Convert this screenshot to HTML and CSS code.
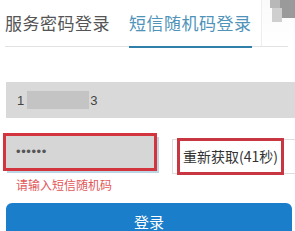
FILE: index.html
```html
<!DOCTYPE html>
<html>
<head>
<meta charset="utf-8">
<link rel="stylesheet" href="styles.css">
</head>
<body>
<div class="page">
  <div class="corner"><span class="sq a"></span><span class="sq b"></span><span class="sq c"></span></div>
  <div class="tabs">
    <div class="tab">服务密码登录</div>
    <div class="tab active">短信随机码登录</div>
  </div>
  <div class="phone"><span>1</span><span class="blur"></span><span>3</span></div>
  <div class="row">
    <div class="left">
      <div class="pw"><div class="pw-in">••••••</div></div>
      <div class="err">请输入短信随机码</div>
    </div>
    <div class="getcode"><span class="mark"></span>重新获取(41秒)</div>
  </div>
  <div class="login">登录</div>
</div>
</body>
</html>
```
FILE: styles.css
```css
html, body { margin: 0; padding: 0; background: #fff; }
body { width: 295px; height: 231px; overflow: hidden; font-family: "Noto Sans CJK SC", "Liberation Sans", sans-serif; }
.page { position: relative; width: 295px; height: 231px; overflow: hidden; }
.corner { position: absolute; top: 0; right: 0; width: 33px; height: 46px; border-left: 1px solid #eeeeee; background: linear-gradient(#fafafa, #fff); }
.sq { position: absolute; display: block; }
.sq.a { left: 8px; top: 0; width: 14px; height: 8px; background: #b8b8b8; }
.sq.b { left: 18px; top: 0; width: 15px; height: 18px; background: #9a9a9a; }
.sq.c { left: 10px; top: 8px; width: 10px; height: 14px; background: #cfcfcf; }
.tabs { display: flex; gap: 19px; margin: 0 7px 0 5px; height: 46px; border-bottom: 1px solid #e3e3e3; }
.tab { font-size: 17px; line-height: 46px; color: #555; letter-spacing: 0.5px; }
.tab.active { color: #4f93b9; border-bottom: 2px solid #2f7fa8; height: 46px; }
.phone { margin: 35px 0 0 6px; height: 36px; background: #d9d9d9; display: flex; align-items: center; padding-left: 11px; font-family: "Liberation Sans", sans-serif; font-size: 13px; color: #444; }
.blur { width: 62px; height: 18px; background: #c4c4c4; margin: 0 1px 0 3px; }
.row { display: flex; margin-top: 15px; align-items: flex-start; }
.left { margin-left: 3px; width: 160px; }
.pw { width: 148px; height: 32px; border: 3px solid #d3353f; box-shadow: 3px 3px 0 -1px #bcd6e6; }
.pw-in { height: 32px; background: #d6d6d6; color: #555; font-family: "Liberation Sans", sans-serif; font-size: 13px; line-height: 32px; padding-left: 10px; letter-spacing: 0.6px; }
.err { margin: 7px 0 0 13px; font-size: 12px; color: #e2585a; line-height: 14px; }
.getcode { position: relative; margin: 6px 0 0 9px; flex: 1; height: 33px; border: 1px solid #dedede; border-right: 0; font-size: 14px; line-height: 33px; color: #333; padding-left: 10px; white-space: nowrap; }
.mark { position: absolute; left: 4px; top: -2px; width: 101px; height: 31px; border: 3px solid #c83642; }
.login { position: absolute; left: 6px; top: 203px; width: 286px; height: 28px; background: #1a7ecb; border-radius: 6px 6px 0 0; color: #fff; font-size: 15px; text-align: center; line-height: 38px; }
```
